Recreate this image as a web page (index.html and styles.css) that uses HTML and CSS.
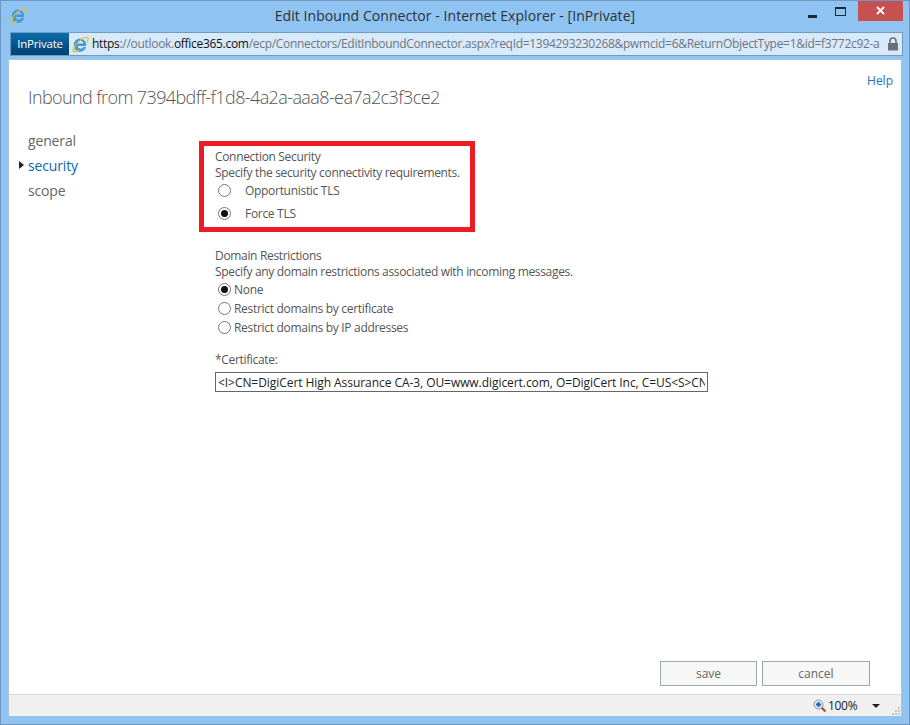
FILE: index.html
```html
<!DOCTYPE html>
<html lang="en">
<head>
<meta charset="utf-8">
<title>Edit Inbound Connector - Internet Explorer - [InPrivate]</title>
<link rel="stylesheet" href="styles.css">
</head>
<body>
<div class="window">
  <header class="titlebar">
    <svg class="ie-icon title-icon" viewBox="0 0 18 18"><use href="#ie"/></svg>
    <div class="title">Edit Inbound Connector - Internet Explorer - [InPrivate]</div>
    <div class="controls">
      <span class="ctl ctl-min"><i></i></span>
      <span class="ctl ctl-max"><i></i></span>
      <span class="ctl-close"><svg viewBox="0 0 9 9" width="9" height="9"><path d="M1 1l7 7M8 1l-7 7" stroke="#fff" stroke-width="1.8"/></svg></span>
    </div>
  </header>
  <div class="addressbar">
    <div class="inprivate">InPrivate</div>
    <svg class="ie-icon addr-icon" viewBox="0 0 18 18">
      <defs>
        <symbol id="ie" viewBox="0 0 18 18">
          <path d="M2 9.500a6.500 6.500 0 0 1 13-.5v1.500H6a3.200 3.200 0 0 0 6 1.200h2.800A6.500 6.500 0 0 1 2 9.500zM6 8h5.800a2.900 2.900 0 0 0-5.800 0z" fill="#3d9be2"/>
          <path d="M1.500 16.500c-1.500-1.500 1-6.500 5.500-10.500s9-5.500 10-4c.6 1-.2 3-1.500 5M3.500 11c-2 3-2.800 4.800-2 5.500.8.700 3.300-.1 6-2" fill="none" stroke="#f2b91e" stroke-width="1.200"/>
        </symbol>
      </defs>
      <use href="#ie"/>
    </svg>
    <div class="url"><b>https</b>://outlook.<b>office365.com</b>/ecp/Connectors/EditInboundConnector.aspx?reqId=1394293230268&amp;pwmcid=6&amp;ReturnObjectType=1&amp;id=f3772c92-a</div>
    <svg class="lock" viewBox="0 0 12 14" width="12" height="14"><path d="M3 6V4a3 3 0 0 1 6 0v2" fill="none" stroke="#6b7078" stroke-width="1.600"/><rect x="1" y="6" width="10" height="7.500" fill="#6b7078"/></svg>
  </div>
  <main class="page">
    <div class="help-row"><a class="help">Help</a></div>
    <h1 class="heading">Inbound from 7394bdff-f1d8-4a2a-aaa8-ea7a2c3f3ce2</h1>
    <div class="columns">
      <nav class="nav">
        <div class="nav-item">general</div>
        <div class="nav-item active">security</div>
        <div class="nav-item">scope</div>
      </nav>
      <div class="form">
        <section class="highlight">
          <div class="line">Connection Security</div>
          <div class="line">Specify the security connectivity requirements.</div>
          <div class="opt wide first"><span class="radio"></span>Opportunistic TLS</div>
          <div class="opt wide"><span class="radio on"></span>Force TLS</div>
        </section>
        <section class="restrict">
          <div class="line">Domain Restrictions</div>
          <div class="line">Specify any domain restrictions associated with incoming messages.</div>
          <div class="opt"><span class="radio on"></span>None</div>
          <div class="opt"><span class="radio"></span>Restrict domains by certificate</div>
          <div class="opt"><span class="radio"></span>Restrict domains by IP addresses</div>
        </section>
        <div class="line cert-label">*Certificate:</div>
        <input class="cert" type="text" readonly value="&lt;I&gt;CN=DigiCert High Assurance CA-3, OU=www.digicert.com, O=DigiCert Inc, C=US&lt;S&gt;CN=mail.protection.outlook.com">
      </div>
    </div>
    <div class="actions">
      <button class="btn btn-save">save</button>
      <button class="btn btn-cancel">cancel</button>
    </div>
  </main>
  <footer class="status">
    <svg class="zoom" viewBox="0 0 14 14" width="14" height="14"><path d="M8.500 8.500l4 4" stroke="#8a5a2b" stroke-width="2.200"/><circle cx="5.500" cy="5.500" r="4.500" fill="#dce9f5" stroke="#8a97a5"/><path d="M3 5.500h5M5.500 3v5" stroke="#1f5fb0" stroke-width="1.800"/></svg>
    <span class="zoom-text">100%</span>
    <span class="caret"></span>
    <svg class="grip" viewBox="0 0 9 9" width="9" height="9"><path d="M7 1h2v2H7zM4 4h2v2H4zM7 4h2v2H7zM1 7h2v2H1zM4 7h2v2H4zM7 7h2v2H7z" fill="#c3c3c3"/></svg>
  </footer>
</div>
</body>
</html>
```
FILE: styles.css
```css
* { box-sizing: border-box; }
html, body { margin: 0; padding: 0; }
body { width: 910px; height: 725px; overflow: hidden; font-family: "Open Sans", "Noto Sans", sans-serif; }
.window { width: 910px; height: 725px; background: #8fc3f2; border: 1px solid #6d97c0; display: flex; flex-direction: column; padding: 0 7px 8px 7px; }

.titlebar { height: 31px; display: flex; align-items: center; flex: none; position: relative; }
.ie-icon { width: 17px; height: 17px; flex: none; }
.title-icon { margin: -2px 0 0 2px; }
.title { position: absolute; left: 0; right: 0; top: 5px; text-align: center; font-size: 14px; line-height: 20px; color: #2c3136; letter-spacing: 0.06px; }
.controls { margin-left: auto; display: flex; align-items: flex-start; height: 31px; margin-top: -1px; }
.ctl { width: 27px; height: 21px; display: flex; align-items: flex-end; justify-content: center; }
.ctl-min { margin-right: 3px; }
.ctl-min i { width: 9px; height: 3px; background: #1e2a35; margin-bottom: 4px; }
.ctl-max { margin-right: 2px; }
.ctl-max i { width: 11px; height: 9px; border: 1px solid #1e2a35; border-top-width: 2px; margin-bottom: 6px; margin-right: 4px; }
.ctl-close { width: 45px; height: 20px; background: #c75050; display: flex; align-items: center; justify-content: center; margin-right: -1px; }

.addressbar { height: 24px; flex: none; margin: 0 -1px 3px 2px; background: #d8e9fa; border: 1px solid #6f9bc0; display: flex; align-items: center; }
.inprivate { width: 58px; height: 22px; flex: none; background: linear-gradient(#0c6dab, #02406f); color: #fff; font-size: 11.500px; line-height: 21px; text-align: center; letter-spacing: -0.2px; }
.addr-icon { margin-left: 3px; }
.url { margin-left: 3px; flex: 1; min-width: 0; overflow: hidden; white-space: nowrap; font-size: 12px; color: #6d7680; letter-spacing: -0.3px; line-height: 22px; }
.url b { font-weight: 400; color: #111; }
.lock { flex: none; margin: 0 3px 0 6px; }

.page { flex: 1; min-height: 0; background: #fff; border: 1px solid #a9c3dc; border-bottom: 0; padding: 13px 8px 0 19px; display: flex; flex-direction: column; }
.help-row { display: flex; justify-content: flex-end; height: 12px; }
.help { font-size: 12px; line-height: 16px; color: #1a74bc; }
.heading { font-weight: 300; font-size: 18px; line-height: 24px; color: #555; margin: 0; letter-spacing: -0.6px; }
.columns { display: flex; flex: 1; min-height: 0; margin-top: 20px; }
.nav { width: 171px; flex: none; margin-top: -1px; }
.nav-item { font-size: 14px; line-height: 25px; color: #666; letter-spacing: -0.15px; position: relative; }
.nav-item.active { color: #0a66ae; }
.nav-item.active::before { content: ""; position: absolute; left: -9px; top: 8px; border-left: 5px solid #222; border-top: 4px solid transparent; border-bottom: 4px solid transparent; }

.form { flex: 1; min-width: 0; padding-top: 12px; }
.line { font-size: 12px; line-height: 16px; color: #555; letter-spacing: -0.33px; }
.highlight { width: 276px; height: 91px; border: 5px solid #ed1c24; padding: 3px 0 0 11px; }
.opt { display: flex; align-items: center; font-size: 12px; line-height: 19px; height: 19px; color: #555; letter-spacing: -0.3px; }
.opt.wide { height: 23px; }
.opt.first { margin-top: -2px; }
.radio { width: 13px; height: 13px; border: 1px solid #777; border-radius: 50%; background: #fff; margin: 0 3px 0 3px; flex: none; position: relative; }
.opt.wide .radio { margin-right: 14px; }
.radio.on::after { content: ""; position: absolute; left: 2px; top: 2px; width: 7px; height: 7px; border-radius: 50%; background: #111; }
.restrict { margin: 16px 0 0 16px; }
.cert-label { margin: 15px 0 0 16px; }
.cert { display: block; width: 493px; height: 20px; margin: 4px 0 0 16px; border: 1px solid #666; border-radius: 0; outline: 0; background: #fff; padding: 0 2px; font: 12px/18px "Open Sans", "Noto Sans", sans-serif; color: #222; letter-spacing: -0.06px; }

.actions { display: flex; justify-content: flex-end; gap: 5px; padding: 0 23px 8px 0; }
.btn { height: 25px; border: 1px solid #a0a8a8; background: #f7f7f7; color: #666; font: 12px/20px "Open Sans", "Noto Sans", sans-serif; padding: 0; }
.btn-save { width: 97px; }
.btn-cancel { width: 108px; }

.status { height: 22px; flex: none; background: #f0f0f0; border-top: 1px solid #d9d9d9; border-left: 1px solid #a9c3dc; border-right: 1px solid #a9c3dc; display: flex; align-items: center; padding: 0 1px 0 804px; }
.zoom { flex: none; }
.zoom-text { font-size: 12px; color: #222; margin-left: 1px; letter-spacing: -0.3px; }
.caret { margin-left: 15px; border-top: 4px solid #222; border-left: 4px solid transparent; border-right: 4px solid transparent; }
.grip { margin: 9px 0 0 11px; flex: none; }
```
